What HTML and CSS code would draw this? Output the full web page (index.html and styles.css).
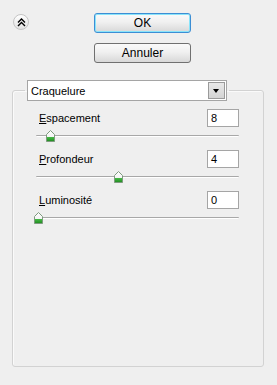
FILE: index.html
```html
<!DOCTYPE html>
<html>
<head>
  <title>Craquelure</title>
  <link rel="stylesheet" href="styles.css">
</head>
<body>
  <div class="dialog">
    <div class="top">
      <button class="collapse" title="Réduire">
        <svg width="9" height="9" viewBox="0 0 9 9">
          <path d="M1 4.5 L4.5 1 L8 4.5 M1 8 L4.5 4.5 L8 8" fill="none" stroke="#000" stroke-width="1.4"/>
        </svg>
      </button>
      <div class="actions">
        <button class="btn default">OK</button>
        <button class="btn">Annuler</button>
      </div>
    </div>

    <fieldset class="group">
      <legend class="group-title">
        <div class="combo">
          <span class="combo-text">Craquelure</span>
          <span class="combo-arrow"></span>
        </div>
      </legend>

      <div class="param">
        <div class="param-head">
          <label><u>E</u>spacement</label>
          <div class="field">8</div>
        </div>
        <div class="slider">
          <div class="track"></div>
          <svg class="thumb" style="left: 10px" width="9" height="12" viewBox="0 0 9 12">
            <path d="M4.5 0.5 L8.5 4.5 L8.5 11.5 L0.5 11.5 L0.5 4.5 Z" fill="url(#g)" stroke="#7f9a7f"/>
          </svg>
        </div>
      </div>

      <div class="param">
        <div class="param-head">
          <label><u>P</u>rofondeur</label>
          <div class="field">4</div>
        </div>
        <div class="slider">
          <div class="track"></div>
          <svg class="thumb" style="left: 78px" width="9" height="12" viewBox="0 0 9 12">
            <path d="M4.5 0.5 L8.5 4.5 L8.5 11.5 L0.5 11.5 L0.5 4.5 Z" fill="url(#g)" stroke="#7f9a7f"/>
          </svg>
        </div>
      </div>

      <div class="param">
        <div class="param-head">
          <label><u>L</u>uminosité</label>
          <div class="field">0</div>
        </div>
        <div class="slider">
          <div class="track"></div>
          <svg class="thumb" style="left: -2px" width="9" height="12" viewBox="0 0 9 12">
            <path d="M4.5 0.5 L8.5 4.5 L8.5 11.5 L0.5 11.5 L0.5 4.5 Z" fill="url(#g)" stroke="#7f9a7f"/>
          </svg>
        </div>
      </div>
    </fieldset>
  </div>

  <svg width="0" height="0" class="defs">
    <defs>
      <linearGradient id="g" x1="0" y1="0" x2="0" y2="1">
        <stop offset="0" stop-color="#ffffff"/>
        <stop offset="0.55" stop-color="#f4f4f4"/>
        <stop offset="0.62" stop-color="#44b844"/>
        <stop offset="1" stop-color="#1f8a1f"/>
      </linearGradient>
    </defs>
  </svg>
</body>
</html>
```

FILE: styles.css
```css
body {
  margin: 0;
  background-color: #efefef;
  font-family: 'Liberation Sans', Arial, sans-serif;
  font-size: 11px;
  color: #000;
}

.dialog {
  width: 277px;
  height: 385px;
}

.defs {
  position: absolute;
}

.top {
  display: flex;
  padding: 13px 0 0 13px;
}

.collapse {
  width: 16px;
  height: 16px;
  margin-top: 1px;
  padding: 0;
  border: 1px solid #c4c4c4;
  border-radius: 50%;
  background: linear-gradient(#ffffff, #e2e2e2);
  display: flex;
  align-items: center;
  justify-content: center;
}

.actions {
  display: flex;
  flex-direction: column;
  gap: 10px;
  margin-left: 65px;
}

.btn {
  width: 97px;
  height: 20px;
  padding: 0;
  border: 1px solid #707070;
  border-radius: 3px;
  background: linear-gradient(#fafafa, #f0f0f0 45%, #d8d8d8);
  font-family: 'Liberation Sans', Arial, sans-serif;
  font-size: 12px;
  color: #000;
}

.btn.default {
  border-color: #3c8ed4;
  box-shadow: inset 0 0 0 1px #8ae4fa;
}

.group {
  box-sizing: border-box;
  width: 252px;
  height: 287px;
  margin: 17px 0 0 12px;
  padding: 0 24px 0 23px;
  border: 1px solid #d2d2d2;
  border-radius: 3px;
  box-shadow: inset 1px 1px 0 #fafafa;
}

.group-title {
  padding: 0 2px;
  margin-left: -11px;
}

.combo {
  box-sizing: border-box;
  width: 200px;
  height: 21px;
  border: 1px solid #a5a5a5;
  background-color: #fff;
  display: flex;
  align-items: center;
  justify-content: space-between;
  padding: 0 1px 0 3px;
}

.combo-arrow {
  box-sizing: border-box;
  width: 17px;
  height: 17px;
  border: 1px solid #9a9a9a;
  background: linear-gradient(#e8e8e8, #d4d4d4);
  position: relative;
}

.combo-arrow::after {
  content: '';
  position: absolute;
  left: 4px;
  top: 6px;
  border-left: 3.5px solid transparent;
  border-right: 3.5px solid transparent;
  border-top: 4px solid #000;
}

.param:first-of-type {
  margin-top: 8px;
}

.param-head {
  display: flex;
  align-items: center;
  justify-content: space-between;
  height: 18px;
}

.param-head label {
  margin-left: 3px;
}

.field {
  box-sizing: border-box;
  width: 32px;
  height: 18px;
  border: 1px solid #a5a5a5;
  background-color: #fff;
  padding: 0 3px;
  line-height: 16px;
}

.slider {
  position: relative;
  box-sizing: border-box;
  height: 23px;
  padding-top: 8px;
}

.track {
  height: 1px;
  background-color: #a8a8a8;
  border-bottom: 1px solid #fff;
  border-radius: 1px;
}

.thumb {
  position: absolute;
  top: 3px;
  display: block;
}
```
